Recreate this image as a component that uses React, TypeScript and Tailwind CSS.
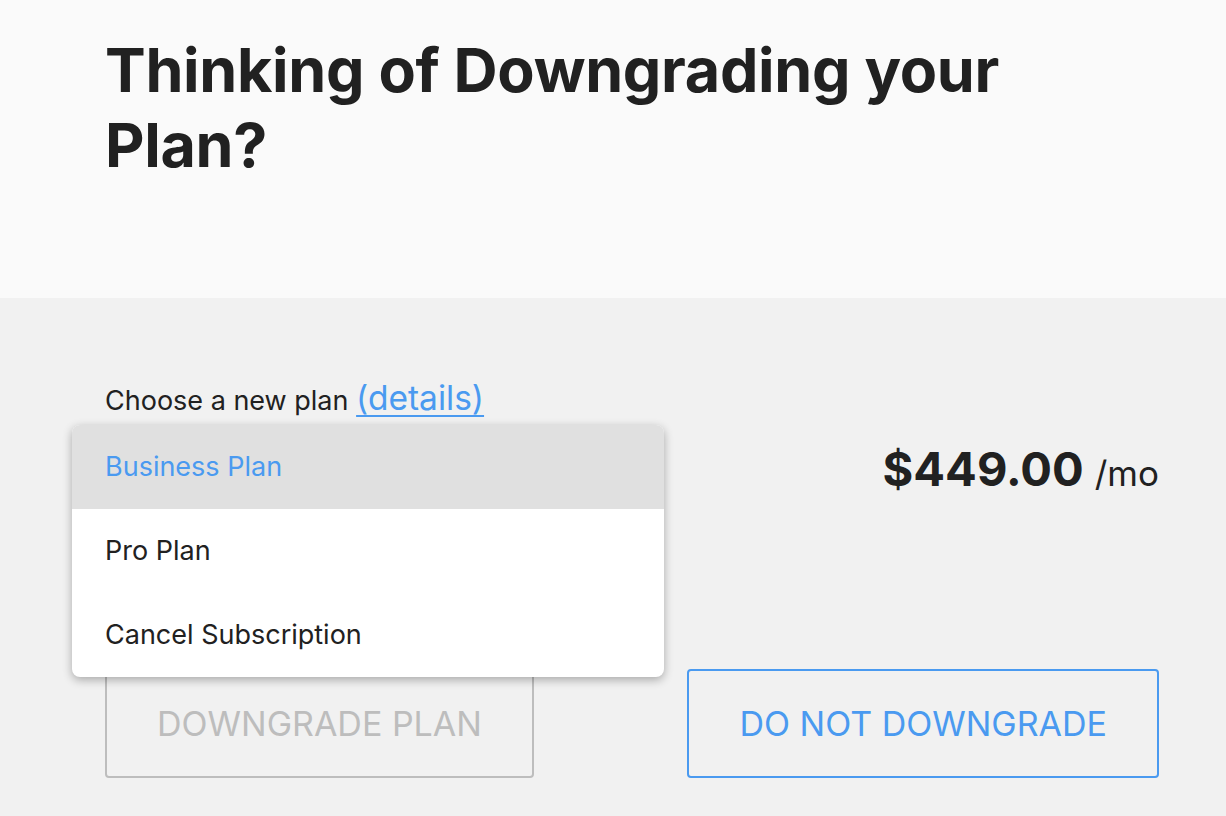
import React from "react";

export default function App() {
  return (
    <div
      className="w-[1226px] h-[816px] overflow-hidden bg-[#f1f1f1] text-[#212121]"
      style={{ fontFamily: "Inter, 'Noto Sans', sans-serif" }}
    >
      <div className="h-[298px] bg-[#fafafa] pl-[105px] pt-[33px]">
        <h1 className="text-[61px] leading-[75px] font-bold tracking-[-0.3px] w-[1000px]">
          Thinking of Downgrading your Plan?
        </h1>
      </div>
      <div className="pl-[105px] pr-[67px] pt-[80px]">
        <div className="text-[27px] leading-[40px]">
          Choose a new plan{" "}
          <a className="text-[#4a9af0] text-[33.5px] underline underline-offset-[5px] decoration-[2px]">
            (details)
          </a>
        </div>
        <div className="relative h-[248px]">
          <div className="absolute left-[-33px] top-[4px] w-[592px] bg-white rounded-[8px] shadow-[0_3px_10px_rgba(0,0,0,0.3)] overflow-hidden z-10">
            <div className="h-[84px] bg-[#e0e0e0] flex items-center pl-[33px] text-[27px] text-[#4a9af0]">
              Business Plan
            </div>
            <div className="h-[84px] flex items-center pl-[33px] text-[27px]">Pro Plan</div>
            <div className="h-[84px] flex items-center pl-[33px] text-[27px]">Cancel Subscription</div>
          </div>
          <div className="absolute right-0 top-[13px] flex items-baseline gap-[11px]">
            <span className="text-[47px] font-bold">$449.00</span>
            <span className="text-[35px]">/mo</span>
          </div>
        </div>
        <div className="flex justify-between">
          <button className="h-[109px] px-[50px] border-2 border-[#bdbdbd] rounded-[4px] text-[34px] text-[#bdbdbd] uppercase">
            Downgrade Plan
          </button>
          <button className="h-[109px] px-[50px] border-2 border-[#4a9af0] rounded-[4px] text-[34px] text-[#4a9af0] uppercase">
            Do Not Downgrade
          </button>
        </div>
      </div>
    </div>
  );
}
